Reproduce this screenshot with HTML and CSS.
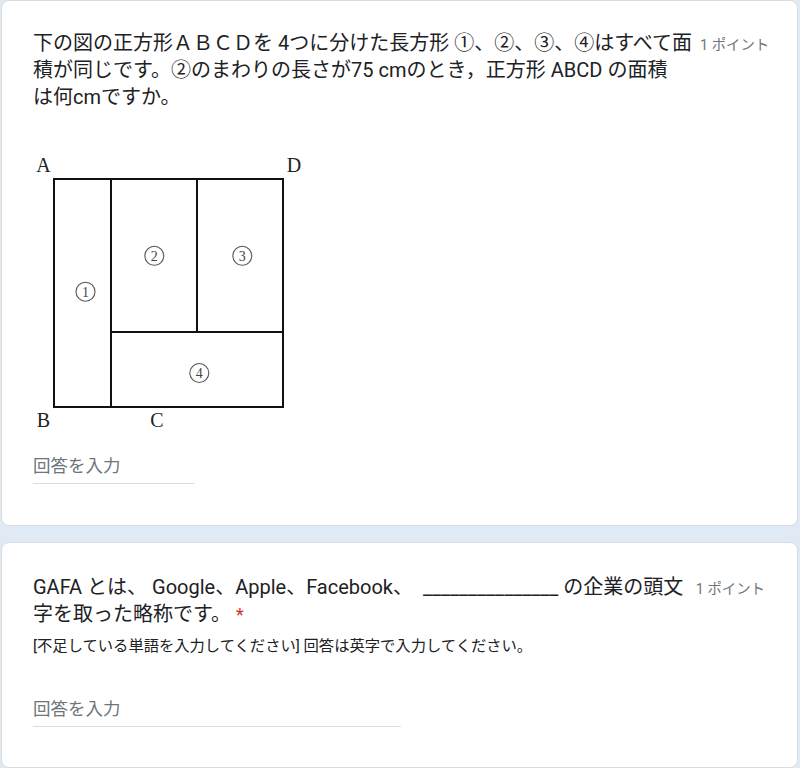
FILE: index.html
```html
<!DOCTYPE html>
<html lang="ja">
<head>
<meta charset="utf-8">
<title>Quiz</title>
<link rel="stylesheet" href="styles.css">
</head>
<body>
<div class="page">
  <section class="card card-first">
    <div class="q-head">
      <div class="q-title">下の図の正方形ＡＢＣＤを 4つに分けた長方形 ①、②、③、④はすべて面<br>積が同じです。②のまわりの長さが75 cmのとき，正方形 ABCD の面積<br>は何cmですか。</div>
      <div class="q-points">1 ポイント</div>
    </div>
    <div class="figure">
      <svg class="diagram" width="275" height="285" viewBox="0 0 275 285" xmlns="http://www.w3.org/2000/svg">
        <g fill="none" stroke="#111" stroke-width="2">
          <rect x="21" y="31" width="229" height="228"/>
          <line x1="78" y1="31" x2="78" y2="259"/>
          <line x1="164" y1="31" x2="164" y2="184"/>
          <line x1="78" y1="184" x2="250" y2="184"/>
        </g>
        <g class="lbl" text-anchor="middle">
          <text x="10.5" y="24">A</text>
          <text x="261" y="24">D</text>
          <text x="10.5" y="279">B</text>
          <text x="124" y="279">C</text>
        </g>
        <g fill="none" stroke="#555" stroke-width="1.1">
          <circle cx="52.5" cy="143.7" r="9.5"/>
          <circle cx="121.3" cy="107.8" r="9.5"/>
          <circle cx="209.3" cy="107.8" r="9.5"/>
          <circle cx="166.3" cy="225" r="9.5"/>
        </g>
        <g class="num" text-anchor="middle">
          <text x="52.5" y="148.7">1</text>
          <text x="121.3" y="112.8">2</text>
          <text x="209.3" y="112.8">3</text>
          <text x="166.3" y="230">4</text>
        </g>
      </svg>
    </div>
    <div class="answer answer-short">回答を入力</div>
  </section>

  <section class="card card-second">
    <div class="q-head">
      <div class="q-title">GAFA とは、 Google、Apple、Facebook、 &nbsp;_______________ の企業の頭文<br>字を取った略称です。<span class="req">*</span></div>
      <div class="q-points">1 ポイント</div>
    </div>
    <div class="q-desc">[不足している単語を入力してください] 回答は英字で入力してください。</div>
    <div class="answer answer-long">回答を入力</div>
  </section>
</div>
</body>
</html>
```

FILE: styles.css
```css
html, body {
  margin: 0;
  padding: 0;
}

body {
  background: #e0eaf5;
  font-family: Roboto, "Noto Sans CJK JP", "Noto Sans", sans-serif;
  color: #202124;
  width: 800px;
  height: 768px;
  overflow: hidden;
}

.page {
  display: flex;
  flex-direction: column;
  gap: 16px;
  padding: 0 2px 0 1px;
}

.card {
  background: #fff;
  border: 1px solid #dadce0;
  border-radius: 8px;
  padding: 29px 32px 40px 31px;
  box-sizing: border-box;
}

.card-first {
  height: 526px;
}

.card-second {
  height: 226px;
  padding-top: 31px;
}

.q-head {
  display: flex;
  align-items: baseline;
}

.q-title {
  flex: 1;
  font-size: 20px;
  line-height: 27px;
  white-space: nowrap;
  letter-spacing: 0;
}

.q-points {
  font-size: 14.4px;
  color: #70757a;
  white-space: nowrap;
  margin-left: 8px;
}

.req {
  color: #d93025;
  font-size: 18px;
  margin-left: 5px;
}

.figure {
  margin-top: 37px;
  height: 285px;
}

.diagram {
  display: block;
}

.lbl text {
  font-family: "Liberation Serif", "DejaVu Serif", serif;
  font-size: 20px;
  fill: #222;
}

.num text {
  font-family: "Liberation Serif", "DejaVu Serif", serif;
  font-size: 14px;
  fill: #444;
}

.answer {
  height: 34px;
  line-height: 34px;
  font-size: 17.5px;
  color: #70757a;
  border-bottom: 1.5px solid #dadce0;
}

.answer-short {
  width: 161px;
  margin-top: 16px;
}

.answer-long {
  width: 368px;
  margin-top: 36px;
}

.q-desc {
  margin-top: 8px;
  font-size: 15.3px;
  line-height: 20px;
  color: #202124;
}
```
